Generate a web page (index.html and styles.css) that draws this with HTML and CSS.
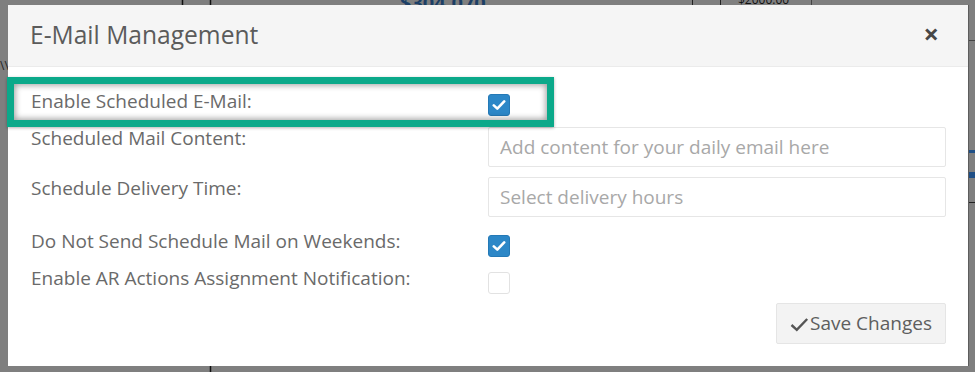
FILE: index.html
```html
<!DOCTYPE html>
<html>
<head>
<meta charset="utf-8">
<link rel="stylesheet" href="styles.css">
</head>
<body>
<div class="page">
  <svg class="backdrop" width="975" height="372" viewBox="0 0 975 372">
    <rect x="0" y="0" width="975" height="372" fill="#7f7f7f"/>
    <line x1="182.5" y1="0" x2="182.5" y2="6" stroke="#111" stroke-width="1.5"/>
    <line x1="210.5" y1="0" x2="210.5" y2="6" stroke="#111" stroke-width="1.5"/>
    <line x1="210.5" y1="366" x2="210.5" y2="372" stroke="#111" stroke-width="1.5"/>
    <line x1="692.5" y1="0" x2="692.5" y2="6" stroke="#222" stroke-width="1"/>
    <line x1="720.5" y1="0" x2="720.5" y2="6" stroke="#222" stroke-width="1"/>
    <line x1="811.5" y1="0" x2="811.5" y2="6" stroke="#444" stroke-width="1"/>
    <text x="400" y="10" class="bg-num">$304,070</text>
    <text x="738" y="4" class="bg-small">$2000.00</text>
    <line x1="968" y1="40.5" x2="975" y2="40.5" stroke="#444" stroke-width="1"/>
    <line x1="968" y1="202.5" x2="975" y2="202.5" stroke="#222" stroke-width="1"/>
    <rect x="969" y="150" width="6" height="3" fill="#1f4f86"/>
    <rect x="969" y="172" width="6" height="6" fill="#1f4f86"/>
    <text x="0" y="70" class="bg-mark">\\</text>
  </svg>

  <div class="modal">
    <div class="modal-header">
      <h4 class="modal-title">E-Mail Management</h4>
      <span class="close">×</span>
    </div>
    <div class="modal-body">
      <div class="row row-first">
        <div class="label label-up5">Enable Scheduled E-Mail:</div>
        <div class="control">
          <span class="checkbox checked">
            <svg width="14" height="12" viewBox="0 0 14 12"><path d="M1.8 6.4 L5.3 9.6 L12.2 2.4" fill="none" stroke="#fff" stroke-width="2.6" stroke-linecap="round" stroke-linejoin="round"/></svg>
          </span>
        </div>
        <div class="highlight"></div>
      </div>
      <div class="row row-input1">
        <div class="label label-up1">Scheduled Mail Content:</div>
        <div class="control">
          <div class="input">Add content for your daily email here</div>
        </div>
      </div>
      <div class="row row-input2">
        <div class="label label-up1">Schedule Delivery Time:</div>
        <div class="control">
          <div class="input">Select delivery hours</div>
        </div>
      </div>
      <div class="row row-check4">
        <div class="label label-up6">Do Not Send Schedule Mail on Weekends:</div>
        <div class="control">
          <span class="checkbox checked">
            <svg width="14" height="12" viewBox="0 0 14 12"><path d="M1.8 6.4 L5.3 9.6 L12.2 2.4" fill="none" stroke="#fff" stroke-width="2.6" stroke-linecap="round" stroke-linejoin="round"/></svg>
          </span>
        </div>
      </div>
      <div class="row row-check5">
        <div class="label label-up6">Enable AR Actions Assignment Notification:</div>
        <div class="control">
          <span class="checkbox"></span>
        </div>
      </div>
      <div class="footer-row">
        <button class="btn">
          <svg width="19" height="15" viewBox="0 0 19 15"><path d="M1.5 8 L6.8 12.8 L17.2 2" fill="none" stroke="#555" stroke-width="2.4" stroke-linejoin="miter"/></svg>Save Changes
        </button>
      </div>
    </div>
  </div>
</div>
</body>
</html>
```

FILE: styles.css
```css
* { box-sizing: border-box; }
html, body {
  margin: 0;
  padding: 0;
  width: 975px;
  height: 372px;
  overflow: hidden;
  background: #7f7f7f;
  font-family: "Open Sans", "Liberation Sans", sans-serif;
}
.page {
  position: relative;
  width: 975px;
  height: 372px;
}
.backdrop {
  display: block;
}
.bg-num {
  font-family: "Open Sans", sans-serif;
  font-weight: 700;
  font-size: 20px;
  fill: #1c3f66;
}
.bg-small {
  font-family: "Open Sans", sans-serif;
  font-size: 12px;
  fill: #111;
}
.bg-mark {
  font-family: "Open Sans", sans-serif;
  font-size: 12px;
  fill: #222;
}
.modal {
  position: absolute;
  left: 8px;
  top: 5px;
  width: 961px;
  height: 361px;
  background: #fff;
  border-right: 1px solid #5d5d5d;
  display: flex;
  flex-direction: column;
}
.modal-header {
  height: 62px;
  flex: none;
  background: #f5f5f5;
  border-bottom: 1px solid #ebebeb;
  display: flex;
  align-items: center;
  justify-content: space-between;
  padding: 0 29px 0 22px;
}
.modal-title {
  margin: 0;
  font-weight: 400;
  font-size: 24.6px;
  color: #5b5b5b;
  line-height: 32px;
  padding-bottom: 1px;
}
.close {
  font-size: 27px;
  font-weight: 700;
  color: #474747;
  line-height: 26px;
  padding-bottom: 3px;
}
.modal-body {
  position: relative;
  padding: 27px 22px 0 23px;
  display: flex;
  flex-direction: column;
}
.row {
  display: flex;
  align-items: flex-start;
}
.row-input1 { margin-top: 11px; }
.row-input2 { margin-top: 10px; }
.row-check4 { margin-top: 18px; }
.row-check5 { margin-top: 15px; }
.label {
  width: 457px;
  flex: none;
  font-size: 19px;
  line-height: 24px;
  color: #6a6a6a;
}
.label-up1 { margin-top: -1px; }
.label-up5 { margin-top: -5px; }
.label-up6 { margin-top: -6px; }
.control {
  width: 458px;
  flex: none;
  display: flex;
}
.checkbox {
  width: 22px;
  height: 22px;
  border-radius: 3px;
  border: 1px solid #e2e2e2;
  background: #fff;
  display: flex;
  align-items: center;
  justify-content: center;
}
.checkbox.checked {
  background: #2c87c7;
  border-color: #2479b6;
}
.input {
  width: 458px;
  height: 40px;
  border: 1px solid #e6e6e6;
  border-radius: 2px;
  padding: 0 11px;
  display: flex;
  align-items: center;
  font-size: 19px;
  color: #a8a8a8;
}
.row-first {
  position: relative;
}
.highlight {
  position: absolute;
  left: -24px;
  top: -17px;
  width: 547px;
  height: 50px;
  border: 7px solid #0ba98a;
  box-shadow: inset 0 0 6px 1px rgba(0, 0, 0, 0.4), 0 1px 3px rgba(0, 0, 0, 0.3);
  pointer-events: none;
}
.footer-row {
  display: flex;
  justify-content: flex-end;
  margin-top: 9px;
}
.btn {
  width: 170px;
  height: 41px;
  border: 1px solid #e5e5e5;
  border-radius: 2px;
  background: #f3f3f3;
  font-family: "Open Sans", "Liberation Sans", sans-serif;
  font-size: 19px;
  color: #5e5e5e;
  display: flex;
  align-items: center;
  justify-content: center;
  gap: 1px;
  padding: 0;
  padding-bottom: 1px;
}
.btn svg {
  margin-top: 2px;
}
```
